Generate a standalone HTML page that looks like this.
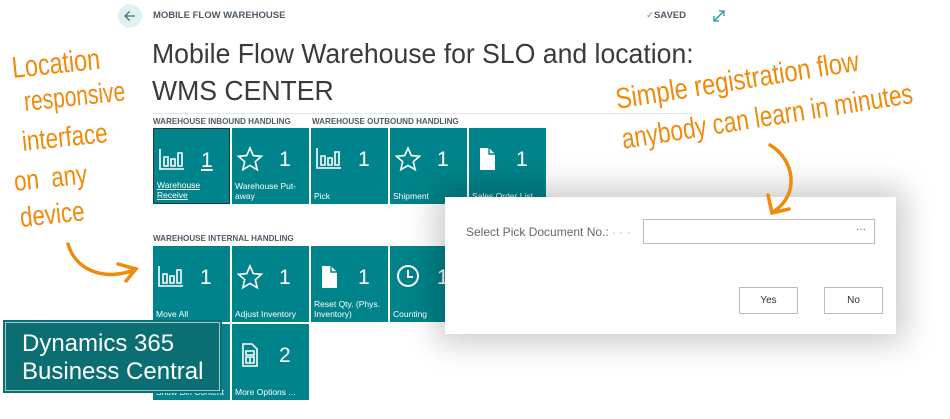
<!DOCTYPE html>
<html><head><meta charset="utf-8"><style>
*{margin:0;padding:0;box-sizing:border-box}
body{width:950px;height:419px;overflow:hidden;background:#fff;position:relative;font-family:"Liberation Sans",sans-serif}
.abs{position:absolute}
.tile{position:absolute;width:77px;height:76px;background:#00838a;color:#fff}
.tile .n{position:absolute;left:47px;top:20px;font-size:21px;font-weight:300}
.tile .l{position:absolute;left:3px;bottom:3px;font-size:8.5px;line-height:10px;width:72px}
.tile svg{position:absolute;left:4px;top:18px}
.sec{position:absolute;font-size:8.5px;color:#505a64;font-weight:bold;transform:scaleX(.95);transform-origin:left}
.hand{position:absolute;color:#f08a0c;font-family:"Liberation Sans",sans-serif;white-space:nowrap}
</style></head><body>
<div class="abs" style="left:118px;top:4px;width:24px;height:24px;border-radius:50%;background:#dff0f1"></div>
<svg class="abs" style="left:122px;top:8px" width="16" height="16" viewBox="0 0 16 16"><path d="M13 8H3M7.5 3.5L3 8l4.5 4.5" stroke="#4b6b75" stroke-width="1.3" fill="none"/></svg>
<div class="abs" style="left:153px;top:10px;font-size:9.5px;color:#505a64;font-weight:bold">MOBILE FLOW WAREHOUSE</div>
<div class="abs" style="left:646px;top:10px;font-size:9.5px;color:#505a64;font-weight:bold"><span style="font-weight:normal;color:#888">✓</span>SAVED</div>
<svg class="abs" style="left:713px;top:10px" width="12" height="12" viewBox="0 0 12 12"><path d="M1 11L11 1M6 1h5v5M1 6v5h5" stroke="#1f9aa3" stroke-width="1.3" fill="none"/></svg>
<div class="abs" style="left:152px;top:35px;font-size:28px;color:#3a3a3a;line-height:37px;transform:scaleX(.95);transform-origin:left;white-space:nowrap">Mobile Flow Warehouse for SLO and location:<br>WMS CENTER</div>
<div class="abs" style="left:153px;top:113px;width:540px;height:1px;background:#e3e6ea"></div>
<div class="sec" style="left:153px;top:116px">WAREHOUSE INBOUND HANDLING</div>
<div class="sec" style="left:312px;top:116px">WAREHOUSE OUTBOUND HANDLING</div>
<div class="sec" style="left:153px;top:233px">WAREHOUSE INTERNAL HANDLING</div>

<svg width="0" height="0" style="position:absolute"><defs>
<g id="bar"><path d="M2 2v20h24M6 10v9h4v-9zM13 12v7h4v-7zM20 6v13h4V6z" stroke="#fff" stroke-width="1.6" fill="none"/></g>
<g id="star"><path d="M14 2l3.3 7.6 8.2.7-6.2 5.4 1.9 8-7.2-4.3-7.2 4.3 1.9-8L2.5 10.3l8.2-.7z" stroke="#fff" stroke-width="1.6" fill="none"/></g>
<g id="doc"><path d="M7 2h9l6 6v16H7z" fill="#fff"/><path d="M16 2v6h6" stroke="#00838a" stroke-width="1.4" fill="none"/></g>
<g id="clock"><circle cx="14" cy="12" r="10" stroke="#fff" stroke-width="2" fill="none"/><path d="M14 6v7h5" stroke="#fff" stroke-width="2" fill="none"/></g>
<g id="calc"><path d="M7 2h9l5 5v17H7z M10 9h8v4h-8z M10 15h8v6h-8z M14 15v6" stroke="#fff" stroke-width="1.6" fill="none"/></g>
</defs></svg>

<div class="tile" style="left:153px;top:128px;border:1.5px solid #1e3a3c"><svg width="30" height="28"><use href="#bar"/></svg><div class="n" style="text-decoration:underline">1</div><div class="l" style="text-decoration:underline">Warehouse<br>Receive</div></div>
<div class="tile" style="left:232px;top:128px"><svg width="30" height="28"><use href="#star"/></svg><div class="n">1</div><div class="l">Warehouse Put-<br>away</div></div>
<div class="tile" style="left:311px;top:128px"><svg width="30" height="28"><use href="#bar"/></svg><div class="n">1</div><div class="l">Pick</div></div>
<div class="tile" style="left:390px;top:128px"><svg width="30" height="28"><use href="#star"/></svg><div class="n">1</div><div class="l">Shipment</div></div>
<div class="tile" style="left:469px;top:128px"><svg width="30" height="28"><use href="#doc"/></svg><div class="n">1</div><div class="l">Sales Order List</div></div>

<div class="tile" style="left:153px;top:246px"><svg width="30" height="28"><use href="#bar"/></svg><div class="n">1</div><div class="l">Move All</div></div>
<div class="tile" style="left:232px;top:246px"><svg width="30" height="28"><use href="#star"/></svg><div class="n">1</div><div class="l">Adjust Inventory</div></div>
<div class="tile" style="left:311px;top:246px"><svg width="30" height="28"><use href="#doc"/></svg><div class="n">1</div><div class="l">Reset Qty. (Phys.<br>Inventory)</div></div>
<div class="tile" style="left:390px;top:246px"><svg width="30" height="28"><use href="#clock"/></svg><div class="n">1</div><div class="l">Counting</div></div>
<div class="tile" style="left:153px;top:324px"><div class="l">Show Bin Content</div></div>
<div class="tile" style="left:232px;top:324px"><svg width="30" height="28"><use href="#calc"/></svg><div class="n">2</div><div class="l">More Options ...</div></div>

<div class="abs" style="left:445px;top:197px;width:451px;height:137px;background:#fff;box-shadow:0 0 30px 8px rgba(0,0,0,.22)">
<div class="abs" style="left:21px;top:28px;font-size:12px;color:#666">Select Pick Document No.: <span style="color:#bbb">· · ·</span></div>
<div class="abs" style="left:198px;top:22px;width:232px;height:25px;border:1px solid #bbb"><span class="abs" style="right:8px;top:4px;font-size:10px;color:#555">···</span></div>
<div class="abs" style="left:294px;top:90px;width:59px;height:27px;border:1px solid #bbb;font-size:10px;text-align:center;line-height:25px;color:#333">Yes</div>
<div class="abs" style="left:379px;top:90px;width:59px;height:27px;border:1px solid #bbb;font-size:10px;text-align:center;line-height:25px;color:#333">No</div>
</div>

<div class="abs" style="left:3px;top:320px;width:219px;height:73px;background:#0b6e72;border:2px solid #0b6e72;box-shadow:inset 0 0 0 1px #9fc9cb"></div>
<div class="abs" style="left:22px;top:330px;font-size:24px;line-height:28px;color:#fff;font-family:'Liberation Sans',sans-serif;white-space:nowrap">Dynamics 365<br>Business Central</div>

<div class="hand" style="left:12px;top:52px;font-size:30px;transform:rotate(-6deg) scaleX(.78);transform-origin:left">Location</div>
<div class="hand" style="left:24px;top:86px;font-size:28px;transform:rotate(-6deg) scaleX(.75);transform-origin:left">responsive</div>
<div class="hand" style="left:22px;top:126px;font-size:28px;transform:rotate(-6deg) scaleX(.8);transform-origin:left">interface</div>
<div class="hand" style="left:14px;top:166px;font-size:28px;transform:rotate(-6deg) scaleX(.8);transform-origin:left">on&nbsp; any</div>
<div class="hand" style="left:20px;top:202px;font-size:28px;transform:rotate(-6deg) scaleX(.8);transform-origin:left">device</div>
<svg class="abs" style="left:0;top:0" width="950" height="419"><g stroke="#f08a0c" stroke-width="3.5" fill="none" stroke-linecap="round">
<path d="M68 244C75 268 100 282 135 270M118 264l18 5-10 12"/>
<path d="M770 145C795 160 800 195 773 212M768 195l4 18 17-4"/>
</g></svg>
<div class="hand" style="left:616px;top:84px;font-size:29px;transform:rotate(-9deg) scaleX(.82);transform-origin:left">Simple registration flow</div>
<div class="hand" style="left:622px;top:124px;font-size:29px;transform:rotate(-9deg) scaleX(.78);transform-origin:left">anybody can learn in minutes</div>
</body></html>
